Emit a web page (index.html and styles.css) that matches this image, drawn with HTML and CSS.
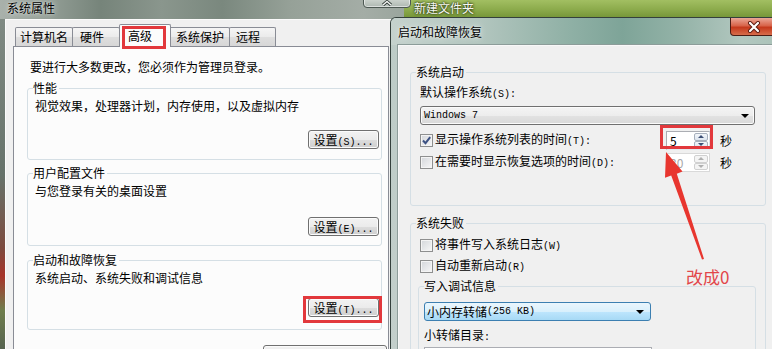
FILE: index.html
```html
<!DOCTYPE html>
<html lang="zh-CN">
<head>
<meta charset="utf-8">
<title>系统属性</title>
<link rel="stylesheet" href="styles.css">
</head>
<body>
<div class="desktop">
  <div class="topbar">新建文件夹</div>

  <section class="win win-left">
    <header class="caption-l">系统属性</header>
    <div class="frame-l">
      <div class="client-l">
        <nav class="tabs">
          <span class="tab t1">计算机名</span>
          <span class="tab t2">硬件</span>
          <span class="tab t3 sel">高级</span>
          <span class="tab t4">系统保护</span>
          <span class="tab t5">远程</span>
        </nav>
        <div class="page">
          <p class="note">要进行大多数更改，您必须作为管理员登录。</p>
          <fieldset class="grp grp-l g1">
            <legend>性能</legend>
            <div class="gb">
              <p class="desc">视觉效果，处理器计划，内存使用，以及虚拟内存</p>
              <div class="btnrow"><button class="btn">设置<span class="lat">(S)...</span></button></div>
            </div>
          </fieldset>
          <fieldset class="grp grp-l g2">
            <legend>用户配置文件</legend>
            <div class="gb">
              <p class="desc">与您登录有关的桌面设置</p>
              <div class="btnrow"><button class="btn">设置<span class="lat">(E)...</span></button></div>
            </div>
          </fieldset>
          <fieldset class="grp grp-l g3">
            <legend>启动和故障恢复</legend>
            <div class="gb">
              <p class="desc">系统启动、系统失败和调试信息</p>
              <div class="btnrow"><button class="btn">设置<span class="lat">(T)...</span></button></div>
            </div>
          </fieldset>
          <button class="btn btn-env">环境变量<span class="lat">(N)...</span></button>
        </div>
      </div>
    </div>
  </section>

  <div class="glassbtn">
    <svg width="12" height="6" viewBox="0 0 12 6"><polyline points="2,5 6,1.5 10,5" fill="none" stroke="#2a3430" stroke-width="3"/><polyline points="2,5 6,1.5 10,5" fill="none" stroke="#f4f6f4" stroke-width="1.4"/></svg>
  </div>

  <section class="win win-right">
    <header class="caption-r">启动和故障恢复</header>
    <div class="closebtn">
      <svg width="14" height="12" viewBox="0 0 14 12"><path d="M3 2 L11 10 M11 2 L3 10" stroke="#5a1a10" stroke-width="4" stroke-linecap="round"/><path d="M3 2 L11 10 M11 2 L3 10" stroke="#ffffff" stroke-width="2.2" stroke-linecap="round"/></svg>
    </div>
    <div class="client-r">
      <fieldset class="grp grp-r r1">
        <legend>系统启动</legend>
        <div class="gb gb-r">
          <p class="lbl l-os">默认操作系统<span class="lat">(S):</span></p>
          <div class="combo combo-gray"><span class="lat">Windows 7</span><i class="drop"></i></div>
          <div class="crow c1">
            <span class="chk on"><svg width="11" height="11" viewBox="0 0 11 11"><path d="M2 5.5 L4.5 8.2 L9.2 2.2" fill="none" stroke="#3d5283" stroke-width="2"/></svg></span>
            <span class="ctext">显示操作系统列表的时间<span class="lat">(T):</span></span>
            <span class="spin"><span class="sval">5</span><span class="sbtns"><i class="up"></i><i class="dn"></i></span></span>
            <span class="sec">秒</span>
          </div>
          <div class="crow c2">
            <span class="chk"></span>
            <span class="ctext">在需要时显示恢复选项的时间<span class="lat">(D):</span></span>
            <span class="spin off"><span class="sval">30</span><span class="sbtns"><i class="up"></i><i class="dn"></i></span></span>
            <span class="sec">秒</span>
          </div>
        </div>
      </fieldset>
      <fieldset class="grp grp-r r2">
        <legend>系统失败</legend>
        <div class="gb gb-r">
          <div class="crow c3"><span class="chk"></span><span class="ctext">将事件写入系统日志<span class="lat">(W)</span></span></div>
          <div class="crow c4"><span class="chk"></span><span class="ctext">自动重新启动<span class="lat">(R)</span></span></div>
          <fieldset class="grp sub">
            <legend>写入调试信息</legend>
            <div class="combo combo-blue">小内存转储<span class="lat">(256 KB)</span><i class="drop"></i></div>
            <p class="lbl l-dir">小转储目录<span class="lat">:</span></p>
            <div class="field"><span class="lat">%SystemRoot%\Minidump</span></div>
          </fieldset>
        </div>
      </fieldset>
    </div>
  </section>

  <span class="mark mark-tab"></span>
  <span class="mark mark-btn"></span>
  <span class="mark mark-spin"></span>

  <svg class="arrow" width="772" height="349" viewBox="0 0 772 349">
    <polygon points="666,152 682.5,171.5 676.8,173.8 704,259 702,259.5 671.2,175.6 665,177.8" fill="#e8362f"/>
  </svg>
  <span class="note-red">改成0</span>
</div>
</body>
</html>
```

FILE: styles.css
```css
* { box-sizing: border-box; }
html, body { margin: 0; padding: 0; }
body {
  width: 772px; height: 349px; overflow: hidden;
  font-family: "Noto Sans CJK SC", "Noto Sans", sans-serif;
  font-size: 12px; color: #000; background: #56625a;
}
p { margin: 0; }
.lat { font-family: "Liberation Mono", monospace; font-size: 10px; }
.desktop { position: relative; width: 772px; height: 349px; overflow: hidden; }

/* background window strip */
.topbar {
  position: absolute; left: 404px; top: 0; width: 368px; height: 18px;
  padding-left: 10px; line-height: 15px; font-size: 12px; color: #f6f8f2;
  background: linear-gradient(#a2bf62, #8cab4c 55%, #779739);
  border-bottom: 1px solid #34441e;
  text-shadow: 0 0 2px #24320f, 0 0 3px #24320f;
}
.glassbtn {
  position: absolute; left: 363px; top: -4px; width: 48px; height: 12px;
  border: 1px solid #4c5852; border-radius: 0 0 4px 4px;
  background: linear-gradient(#d6dcd7, #aeb8b1);
  box-shadow: inset 0 0 0 1px rgba(255,255,255,.55);
  display: flex; justify-content: center; align-items: flex-end; padding-bottom: 1px;
}

/* left window */
.win-left {
  position: absolute; left: 0; top: 0; width: 404px; height: 349px;
  display: flex; flex-direction: column;
  background: linear-gradient(90deg, #a9b1ab 0%, #939e96 12%, #76847a 25%, #8a968d 40%, #7a887e 55%, #96a198 72%, #a4ada6 90%, #9aa59d 100%);
}
.caption-l {
  height: 19px; padding-left: 7px; line-height: 15px; flex: none;
  text-shadow: 0 0 6px rgba(255,255,255,.75), 0 0 2px rgba(255,255,255,.6);
}
.frame-l {
  flex: 1; padding-left: 5px;
  background: linear-gradient(180deg, #7f8a83 0%, #66726a 45%, #7c4a3e 66%, #a8342a 74%, #6e7d4c 84%, #4b5751 100%);
}
.client-l {
  height: 100%; background: #f0f0f0;
  border-top: 1px solid #fbfbfb; border-left: 1px solid #fbfbfb;
  padding-top: 7px;
}
.tabs { display: flex; align-items: flex-end; height: 19px; padding-left: 9px; }
.tab {
  height: 19px; margin-left: -1px; padding-left: 6px; line-height: 17px; white-space: nowrap;
  border: 1px solid #898c95; border-bottom: 0; border-radius: 2px 2px 0 0;
  background: linear-gradient(#f5f5f5, #ebebeb 50%, #dedede 51%, #d7d7d7);
}
.t1 { width: 58px; margin-left: 0; padding-left: 4px; }
.t2 { width: 48px; padding-left: 7px; }
.t3 { width: 52px; padding-left: 8px; }
.t4 { width: 61px; margin-left: -2px; }
.t5 { width: 47px; }
.tab.sel {
  position: relative; height: 23px; margin-bottom: -1px; padding-top: 2px;
  background: #fcfcfc;
}
.page {
  margin-left: 7px; width: 376px; height: 320px;
  border: 1px solid #898c95; background: #fcfcfc;
  padding: 12px 0 0 13px;
}
.note { line-height: 16px; margin-left: 3px; }

.grp {
  margin: 0; min-width: 0;
  border: 1px solid #d5dfe5; border-radius: 3px;
}
.grp legend { padding: 0 2px 0 0; line-height: 14px; font-size: 12px; }
.grp-l { width: 355px; padding: 0 2px 10px 5px; }
.g1 { margin-top: 6px; }
.g2 { margin-top: 6px; padding-bottom: 9px; }
.g3 { margin-top: 7px; padding-bottom: 12px; }
.gb { padding-left: 2px; }
.desc { margin-top: 3px; line-height: 16px; }
.btnrow { display: flex; justify-content: flex-end; margin-top: 16px; }
.g2 .btnrow { margin-top: 18px; }
.g3 .btnrow { margin-top: 12px; }

.btn {
  width: 71px; height: 19px; padding: 0; margin: 0;
  font-family: inherit; font-size: 12px; line-height: 17px; color: #000;
  border: 1px solid #707070; border-radius: 3px;
  background: linear-gradient(#f2f2f2, #ebebeb 50%, #dddddd 51%, #cfcfcf);
  box-shadow: inset 0 0 0 1px #fbfbfb;
}
.btn-env { display: block; width: 124px; height: 20px; margin: 15px 0 0 236px; }

/* right window */
.win-right {
  position: absolute; left: 390px; top: 17px; width: 400px; height: 340px;
  border: 1px solid #34403c; border-right: 0; border-radius: 6px 0 0 0;
  display: flex; flex-direction: column;
  background: linear-gradient(180deg, #bccbc6, #c3cfcb);
}
.caption-r {
  height: 27px; padding-left: 7px; line-height: 27px; flex: none;
  border-radius: 5px 0 0 0;
  background: linear-gradient(90deg, #c5d2cd 0%, #b3c6bf 22%, #8fb0a5 45%, #7ea498 58%, #93b2a7 72%, #b2c7bf 88%, #a9c1b7 100%);
  text-shadow: 0 0 6px rgba(255,255,255,.8), 0 0 2px rgba(255,255,255,.7);
}
.closebtn {
  position: absolute; left: 339px; top: 0; width: 45px; height: 18px;
  border: 1px solid #4b1c14; border-top: 0; border-radius: 0 0 0 4px;
  background: linear-gradient(#eba797, #d8644a 45%, #c5391c 55%, #d76d4b);
  display: flex; align-items: center; padding-left: 16px;
}
.client-r {
  flex: 1; margin-left: 7px; background: #f0f0f0;
  border-top: 1px solid #f8f8f8; border-left: 1px solid #f8f8f8;
  box-shadow: -1px -1px 0 #8c9c99;
}
.grp-r { width: 356px; margin-left: 11px; padding: 0 10px 33px 5px; }
.r1 { margin-top: 19px; }
.r2 { margin-top: 10px; padding-bottom: 40px; }
.gb-r { padding-left: 4px; }
.lbl { line-height: 16px; }
.l-os { margin-top: 5px; }

.combo {
  display: flex; align-items: center; height: 19px;
  border-radius: 3px; padding-left: 3px;
}
.combo-gray {
  margin-top: 3px;
  border: 1px solid #707070;
  background: linear-gradient(#f4f4f4, #ededed 50%, #e2e2e2 51%, #d9d9d9);
  box-shadow: inset 0 0 0 1px #fbfbfb;
}
.combo .drop {
  margin-left: auto; margin-right: 5px;
  width: 0; height: 0;
  border-left: 4px solid transparent; border-right: 4px solid transparent;
  border-top: 4px solid #000;
}
.combo-blue {
  width: 227px; margin-top: 9px; padding-left: 2px;
  border: 1px solid #3c7fb1;
  background: linear-gradient(#eaf6fd, #d9f0fc 50%, #bee6fd 51%, #a7d9f5);
}
.combo-blue .drop { margin-right: 6px; }

.crow { display: flex; align-items: center; }
.c1 { margin-top: 6px; height: 19px; }
.c2 { margin-top: 3px; height: 19px; }
.c3 { margin-top: 7px; height: 16px; }
.c4 { margin-top: 5px; height: 16px; }
.chk {
  width: 13px; height: 13px; flex: none; margin-right: 2px;
  border: 1px solid #8e8f8f;
  background: linear-gradient(135deg, #d3d6da, #f7f7f7);
  box-shadow: inset 0 0 0 1px #f4f4f4;
  display: flex; align-items: center; justify-content: center;
}
.ctext { line-height: 16px; white-space: nowrap; }
.c1 .ctext, .c2 .ctext { flex: 1; }
.spin {
  width: 44px; height: 19px; flex: none; display: flex;
  border: 1px solid #abadb3; border-bottom-color: #e3e9ef; border-right-color: #dbdfe6;
  background: #fff;
}
.sval { flex: 1; padding-left: 3px; line-height: 17px; }
.sbtns { width: 15px; display: flex; flex-direction: column; padding: 1px 1px 1px 0; }
.sbtns i {
  flex: 1; border: 1px solid #a7b0bd; border-radius: 2px;
  background: linear-gradient(#f3f6fa, #dde5ef);
  display: flex; align-items: center; justify-content: center;
}
.sbtns i::after {
  content: ""; width: 0; height: 0;
  border-left: 3px solid transparent; border-right: 3px solid transparent;
}
.sbtns .up::after { border-bottom: 3px solid #3d4f75; }
.sbtns .dn::after { border-top: 3px solid #3d4f75; }
.spin.off { border-color: #d9d9d9; }
.spin.off .sval { color: #a8a8a8; }
.spin.off .sbtns i { border-color: #d0d0d0; background: #f4f4f4; }
.spin.off .up::after { border-bottom-color: #b0b0b0; }
.spin.off .dn::after { border-top-color: #b0b0b0; }
.sec { width: 12px; margin: 0 23px 0 10px; line-height: 16px; }

.sub { width: 338px; margin: 5px 0 0 -2px; padding: 0 0 20px 5px; }
.l-dir { margin-top: 6px; }
.field {
  width: 228px; height: 20px; margin-top: 1px; padding: 3px 0 0 4px;
  border: 1px solid #abadb3; background: #fff; line-height: 14px;
}

/* annotations */
.mark { position: absolute; border: 3px solid #e2383c; }
.mark-tab { left: 122px; top: 26px; width: 44px; height: 23px; }
.mark-btn { left: 303px; top: 296px; width: 79px; height: 27px; }
.mark-spin { left: 660px; top: 125px; width: 53px; height: 24px; }
.arrow { position: absolute; left: 0; top: 0; }
.note-red {
  position: absolute; left: 686px; top: 266px;
  font-size: 17px; line-height: 22px; color: #e2464a;
  font-family: "Noto Sans CJK SC", sans-serif;
}
```
